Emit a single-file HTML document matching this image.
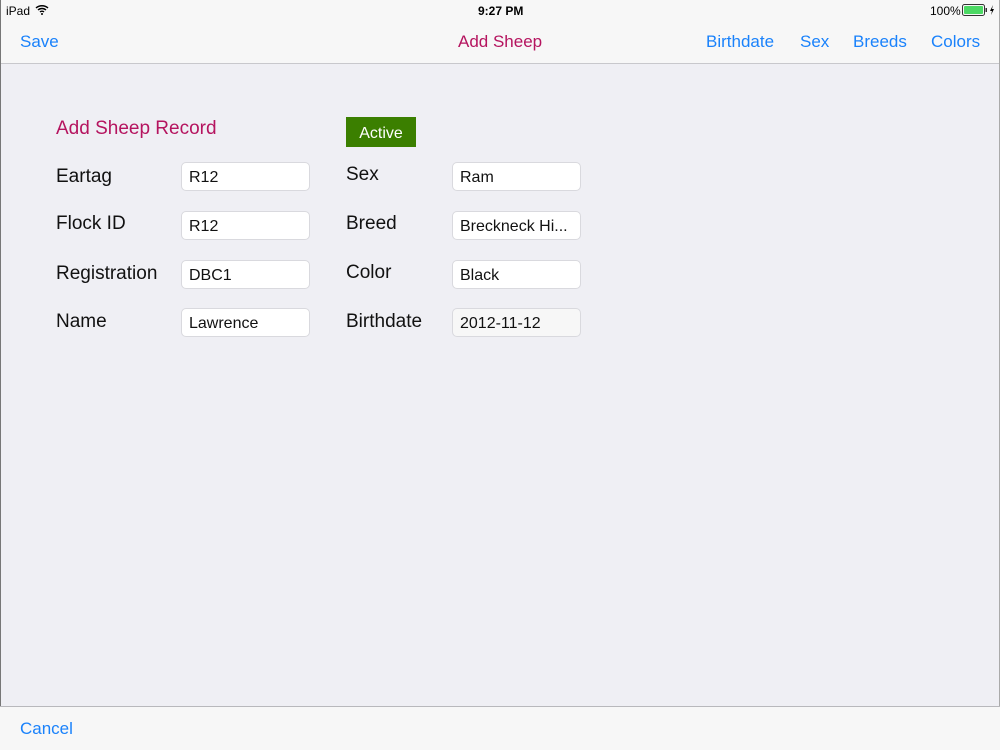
<!DOCTYPE html>
<html><head><meta charset="utf-8"><style>
*{margin:0;padding:0;box-sizing:border-box}
body{width:1000px;height:750px;background:#efeff4;font-family:"Liberation Sans",sans-serif;position:relative;overflow:hidden}
.edge{position:absolute;top:0;width:1px;height:750px;background:#777}
.top{position:absolute;left:0;top:0;width:1000px;height:64px;background:#f7f7f7;border-bottom:1px solid #c8c8cc}
.bot{position:absolute;left:0;top:706px;width:1000px;height:44px;background:#f7f7f7;border-top:1px solid #b8b8bc}
.t{position:absolute;white-space:nowrap}
.blue{color:#1a82fb;font-size:17px}
.lbl{position:absolute;font-size:19px;color:#111}
.in{position:absolute;width:129px;height:29px;background:#fff;border:1px solid #d9d9de;border-radius:5px;font-size:16px;color:#111;padding:6px 0 0 7px}
</style></head><body>
<div class="top">
<div class="t" style="left:6px;top:4px;font-size:12px">iPad</div>
<svg class="t" style="left:35px;top:4px" width="14" height="11" viewBox="0 0 14 11"><path d="M1 4a9 9 0 0 1 12 0M3 6a6 6 0 0 1 8 0M5 8a3 3 0 0 1 4 0" stroke="#000" stroke-width="1.5" fill="none"/><circle cx="7" cy="10" r="1" fill="#000"/></svg>
<div class="t" style="left:478px;top:4px;font-size:12px;font-weight:bold">9:27 PM</div>
<div class="t" style="left:930px;top:4px;font-size:12px">100%</div>
<svg class="t" style="left:962px;top:4px" width="36" height="12" viewBox="0 0 36 12"><rect x="0.5" y="0.5" width="22" height="11" rx="2" fill="none" stroke="#333"/><rect x="2" y="2" width="19" height="8" rx="1" fill="#4cd964"/><rect x="23.5" y="4" width="1.5" height="4" fill="#333"/><path d="M31 1l-3 6h2l-1 4 3-6h-2z" fill="#000"/></svg>
<div class="t blue" style="left:20px;top:32px">Save</div>
<div class="t" style="left:458px;top:32px;font-size:17px;color:#b5145f">Add Sheep</div>
<div class="t blue" style="left:706px;top:32px">Birthdate</div>
<div class="t blue" style="left:800px;top:32px">Sex</div>
<div class="t blue" style="left:853px;top:32px">Breeds</div>
<div class="t blue" style="left:931px;top:32px">Colors</div>
</div>
<div class="edge" style="left:0"></div><div class="edge" style="left:999px;background:#aaa"></div>
<div class="t" style="left:56px;top:118px;font-size:19px;color:#b5145f">Add Sheep Record</div>
<div class="t" style="left:346px;top:117px;width:70px;height:30px;background:#3b7f00;color:#fff;font-size:16px;text-align:center;line-height:31px;padding-top:1px">Active</div>
<div class="lbl" style="left:56px;top:166px">Eartag</div>
<div class="lbl" style="left:56px;top:213px">Flock ID</div>
<div class="lbl" style="left:56px;top:263px">Registration</div>
<div class="lbl" style="left:56px;top:311px">Name</div>
<div class="lbl" style="left:346px;top:164px">Sex</div>
<div class="lbl" style="left:346px;top:213px">Breed</div>
<div class="lbl" style="left:346px;top:262px">Color</div>
<div class="lbl" style="left:346px;top:311px">Birthdate</div>
<div class="in" style="left:181px;top:162px">R12</div>
<div class="in" style="left:181px;top:211px">R12</div>
<div class="in" style="left:181px;top:260px">DBC1</div>
<div class="in" style="left:181px;top:308px">Lawrence</div>
<div class="in" style="left:452px;top:162px">Ram</div>
<div class="in" style="left:452px;top:211px">Breckneck Hi...</div>
<div class="in" style="left:452px;top:260px">Black</div>
<div class="in" style="left:452px;top:308px;background:#f7f7f7">2012-11-12</div>
<div class="bot"><div class="t blue" style="left:20px;top:12px">Cancel</div></div>
</body></html>
